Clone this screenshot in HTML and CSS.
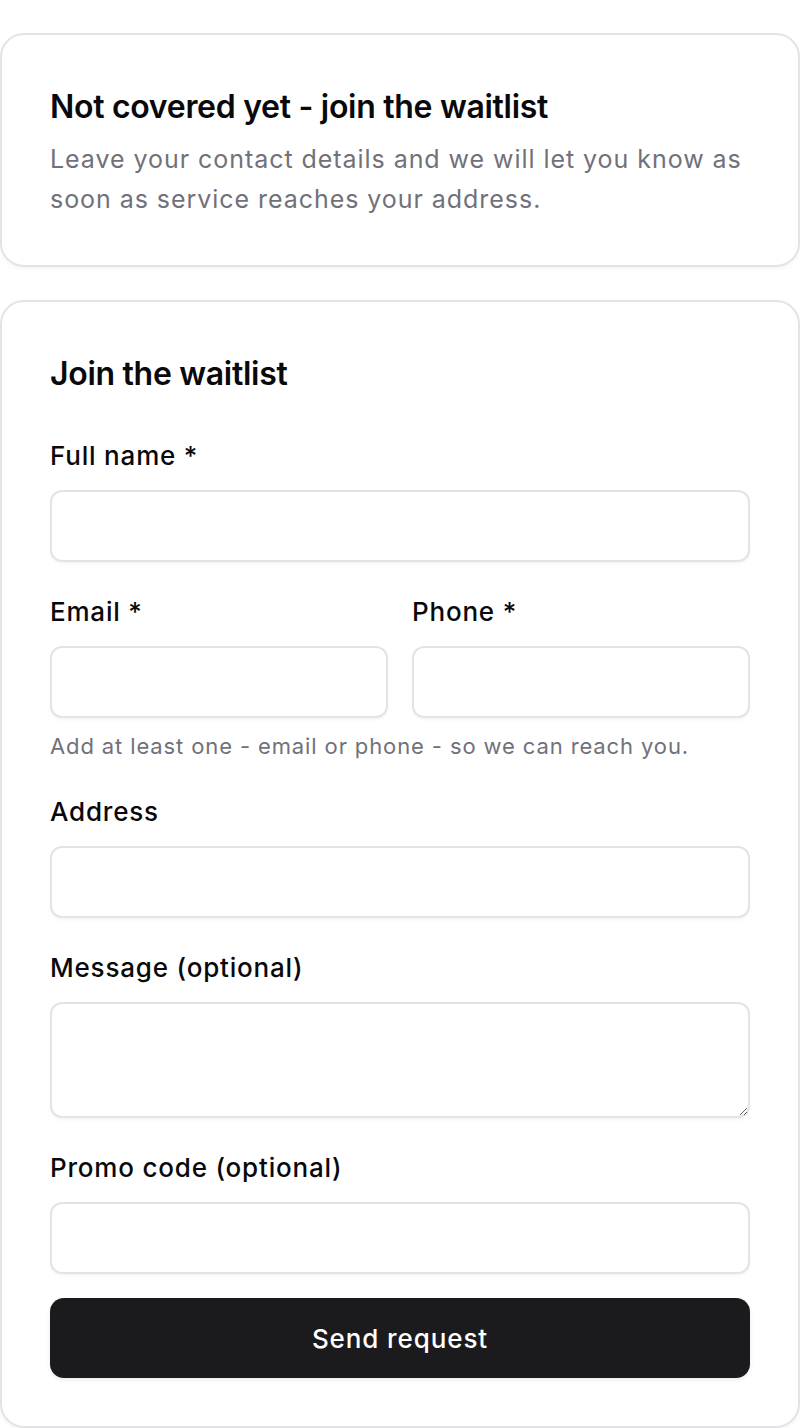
FILE: index.html
```html
<!DOCTYPE html>
<html lang="en">
<head>
<meta charset="utf-8">
<title>Join the waitlist</title>
<link rel="stylesheet" href="styles.css">
</head>
<body>
<main class="page">
  <section class="card intro">
    <h1 class="intro-title">Not covered yet - join the waitlist</h1>
    <p class="intro-text">Leave your contact details and we will let you know as soon as service reaches your address.</p>
  </section>

  <section class="card">
    <h2 class="form-title">Join the waitlist</h2>
    <form class="form">
      <div class="field">
        <label class="label" for="name">Full name *</label>
        <input class="input" id="name" type="text">
      </div>
      <div class="group">
        <div class="row">
          <div class="field">
            <label class="label" for="email">Email *</label>
            <input class="input" id="email" type="email">
          </div>
          <div class="field">
            <label class="label" for="phone">Phone *</label>
            <input class="input" id="phone" type="tel">
          </div>
        </div>
        <p class="hint">Add at least one - email or phone - so we can reach you.</p>
      </div>
      <div class="field">
        <label class="label" for="address">Address</label>
        <input class="input" id="address" type="text">
      </div>
      <div class="field">
        <label class="label" for="message">Message (optional)</label>
        <textarea class="input textarea" id="message"></textarea>
      </div>
      <div class="field">
        <label class="label" for="promo">Promo code (optional)</label>
        <input class="input" id="promo" type="text">
      </div>
      <button class="submit" type="button">Send request</button>
    </form>
  </section>
</main>
</body>
</html>
```

FILE: styles.css
```css
* {
  box-sizing: border-box;
}

html, body {
  margin: 0;
  padding: 0;
  background: #ffffff;
}

body {
  font-family: Inter, "Noto Sans", "Liberation Sans", sans-serif;
  color: #09090b;
}

.page {
  display: flex;
  flex-direction: column;
  gap: 33px;
  padding-top: 33px;
}

.card {
  background: #ffffff;
  border: 2px solid #e4e4e7;
  border-radius: 24px;
  padding: 48px;
  box-shadow: 0 2px 4px rgba(0, 0, 0, 0.04);
}

.intro {
  padding-bottom: 46px;
}

.intro-title {
  margin: 4px 0 0;
  font-size: 32px;
  line-height: 40px;
  font-weight: 600;
  letter-spacing: -0.3px;
}

.intro-text {
  margin: 12px 0 0;
  font-size: 25px;
  line-height: 40px;
  letter-spacing: 0.95px;
  color: #71717a;
}

.form-title {
  margin: 4px 0 44px;
  font-size: 32px;
  line-height: 40px;
  font-weight: 600;
  letter-spacing: -0.3px;
}

.form {
  display: flex;
  flex-direction: column;
  gap: 32px;
}

.field {
  display: flex;
  flex-direction: column;
  min-width: 0;
}

.row {
  display: grid;
  grid-template-columns: 1fr 1fr;
  gap: 24px;
}

.label {
  font-size: 26px;
  line-height: 36px;
  font-weight: 500;
  letter-spacing: 0.8px;
  margin-bottom: 16px;
}

.input {
  display: block;
  width: 100%;
  height: 72px;
  border: 2px solid #e4e4e7;
  border-radius: 12px;
  background: #ffffff;
  box-shadow: 0 2px 3px rgba(0, 0, 0, 0.04);
  font-family: inherit;
  font-size: 24px;
  padding: 0 22px;
  outline: none;
}

.textarea {
  height: 116px;
  padding: 14px 22px;
  resize: vertical;
}

.hint {
  margin: 12px 0 0;
  font-size: 22px;
  line-height: 32px;
  letter-spacing: 0.88px;
  color: #71717a;
}

.submit {
  margin-top: -8px;
  height: 80px;
  border: none;
  border-radius: 14px;
  background: #1b1b1d;
  color: #ffffff;
  font-family: inherit;
  font-size: 26px;
  font-weight: 500;
  letter-spacing: 0.9px;
  box-shadow: 0 2px 4px rgba(0, 0, 0, 0.08);
}
```
